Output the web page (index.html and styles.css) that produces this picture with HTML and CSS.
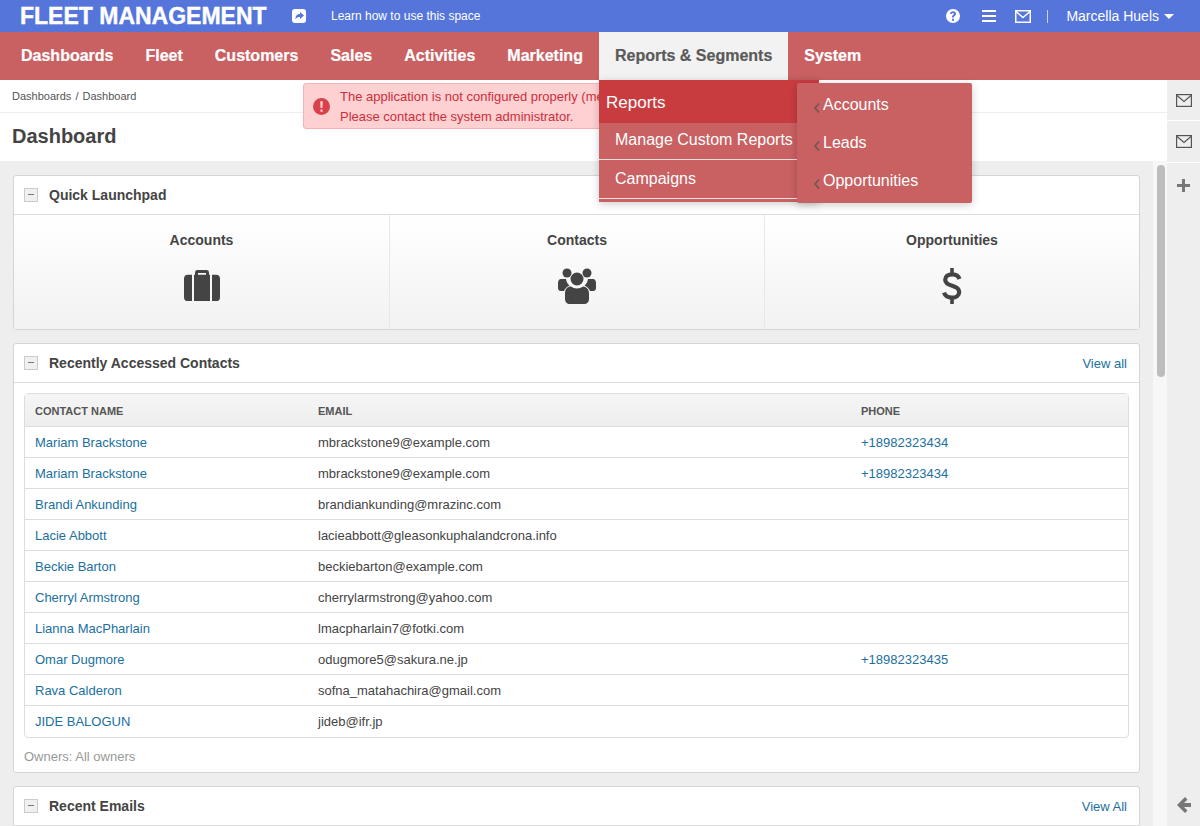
FILE: index.html
```html
<!DOCTYPE html>
<html lang="en">
<head>
<meta charset="UTF-8">
<meta name="viewport" content="width=device-width, initial-scale=1.0">
<title>Dashboard</title>
<link rel="stylesheet" href="styles.css">
</head>
<body>
    <header class="topbar">
        <div class="logo">FLEET MANAGEMENT</div>
        <svg class="share-icon" viewBox="0 0 14 14" width="14" height="14"><path fill="#fff" fill-rule="evenodd" d="M3 0h8a3 3 0 0 1 3 3v8a3 3 0 0 1-3 3H3a3 3 0 0 1-3-3V3a3 3 0 0 1 3-3zM8 3v2C5 5 3.500 6.500 3.500 10.500 4.500 8.500 6 8 8 8v2l4-3.500z"/></svg>
        <a class="learn">Learn how to use this space</a>
        <div class="top-right">
            <svg viewBox="0 0 14 14" width="14" height="14"><path fill="#fff" fill-rule="evenodd" d="M7 0a7 7 0 1 1 0 14A7 7 0 0 1 7 0zM6 9.800v2h2v-2zM7 2.300c-1.700 0-2.800.9-3 2.400l1.800.4c.1-.7.500-1.100 1.100-1.100.6 0 1 .3 1 .8 0 .5-.4.8-.9 1.200-.8.6-1 1.100-1 1.800v.7h1.900V8c0-.4.2-.6.8-1 .8-.6 1.300-1.200 1.300-2.200 0-1.500-1.200-2.500-3-2.500z"/></svg>
            <svg class="top-bars" viewBox="0 0 14 12" width="14" height="12"><path fill="#fff" d="M0 0h14v2H0zM0 5h14v2H0zM0 10h14v2H0z"/></svg>
            <svg class="top-mail" viewBox="0 0 16 13" width="16" height="13"><rect x=".75" y=".75" width="14.500" height="11.500" fill="none" stroke="#fff" stroke-width="1.500"/><path d="M1 1.500l7 6 7-6" fill="none" stroke="#fff" stroke-width="1.500"/></svg>
            <span class="divider"></span>
            <span class="user">Marcella Huels</span>
            <span class="caret"></span>
        </div>
    </header>

    <nav class="mainnav">
        <a>Dashboards</a>
        <a>Fleet</a>
        <a>Customers</a>
        <a>Sales</a>
        <a>Activities</a>
        <a>Marketing</a>
        <a class="active">Reports &amp; Segments</a>
        <a>System</a>
    </nav>

    <div class="menu">
        <div class="menu-title">Reports</div>
        <div class="menu-item">Manage Custom Reports</div>
        <div class="menu-item">Campaigns</div>
    </div>
    <div class="submenu">
        <div class="submenu-item"><svg class="chev" viewBox="0 0 6 10" width="6" height="10"><path d="M5 .5L1 5l4 4.500" fill="none" stroke="#6b5555" stroke-width="1.500"/></svg>Accounts</div>
        <div class="submenu-item"><svg class="chev" viewBox="0 0 6 10" width="6" height="10"><path d="M5 .5L1 5l4 4.500" fill="none" stroke="#6b5555" stroke-width="1.500"/></svg>Leads</div>
        <div class="submenu-item"><svg class="chev" viewBox="0 0 6 10" width="6" height="10"><path d="M5 .5L1 5l4 4.500" fill="none" stroke="#6b5555" stroke-width="1.500"/></svg>Opportunities</div>
    </div>

    <div class="alert">
        <svg viewBox="0 0 16 16" width="17" height="17"><path fill="#d9414c" fill-rule="evenodd" d="M8 0a8 8 0 1 1 0 16A8 8 0 0 1 8 0zM6.800 3l.3 6.500h1.800L9.200 3zM7 10.800v2.200h2v-2.200z"/></svg>
        <div class="alert-text">The application is not configured properly (me<br>Please contact the system administrator.</div>
    </div>

    <div class="wrap">
        <main class="main">
            <div class="breadcrumb">Dashboards <span class="sep">/</span> Dashboard</div>
            <h1 class="page-title">Dashboard</h1>
            <div class="scroller">
                <div class="panels">
                    <section class="panel">
                        <div class="panel-head">
                            <span class="toggle"></span>
                            <h2>Quick Launchpad</h2>
                        </div>
                        <div class="launchpad">
                            <div class="launch">
                                <div class="launch-name">Accounts</div>
                                <svg class="icon-case" viewBox="0 0 36 32" width="36" height="31" preserveAspectRatio="none"><path fill="#444" fill-rule="evenodd" d="M11 5V2.500A2.500 2.500 0 0 1 13.500 0h9A2.500 2.500 0 0 1 25 2.500V5h1v27H10V5zM14 5h8V3h-8zM8 5v27H4a4 4 0 0 1-4-4V9a4 4 0 0 1 4-4zM28 5h4a4 4 0 0 1 4 4v19a4 4 0 0 1-4 4h-4z"/></svg>
                            </div>
                            <div class="launch">
                                <div class="launch-name">Contacts</div>
                                <svg viewBox="0 0 38 36" width="38" height="36"><g fill="#444"><circle cx="9" cy="5" r="4.500"/><circle cx="29" cy="5" r="4.500"/><circle cx="19" cy="11" r="6.500"/><path d="M3 11h5c.5 3 1.500 5 3.500 6.500-2.500 1-4.500 3-5.500 5.500H3c-2 0-3-1-3-3v-5c0-2 1-4 3-4zM35 11h-5c-.5 3-1.500 5-3.500 6.500 2.500 1 4.500 3 5.500 5.500h3c2 0 3-1 3-3v-5c0-2-1-4-3-4zM13 18.500c1.500 1.300 3.700 2 6 2s4.500-.7 6-2c3.500 0 6 3 6 7V31c0 3-2 5-5 5H12c-3 0-5-2-5-5v-5.500c0-4.500 2.500-7 6-7z"/></g></svg>
                            </div>
                            <div class="launch">
                                <div class="launch-name">Opportunities</div>
                                <svg viewBox="0 0 20 36" width="20" height="36"><path d="M17.500 11C16.500 8 14 6.300 10.500 6.300 6 6.300 3.200 8.500 3.200 11.700c0 3.300 2.800 4.800 7 6.100 4.300 1.300 7 2.700 7 6.100 0 3.400-3 5.700-7.200 5.700-4 0-6.900-1.800-8-5" fill="none" stroke="#444" stroke-width="4.200"/><path d="M8.200 0h3.600v7H8.200zM8.200 29h3.600v7H8.200z" fill="#444"/></svg>
                            </div>
                        </div>
                    </section>

                    <section class="panel">
                        <div class="panel-head">
                            <span class="toggle"></span>
                            <h2>Recently Accessed Contacts</h2>
                            <a class="view-all">View all</a>
                        </div>
                        <div class="panel-body">
                            <table class="contacts">
                                <thead>
                                    <tr><th class="col-name">Contact name</th><th class="col-email">Email</th><th>Phone</th></tr>
                                </thead>
                                <tbody>
                                    <tr><td><a>Mariam Brackstone</a></td><td>mbrackstone9@example.com</td><td><a>+18982323434</a></td></tr>
                                    <tr><td><a>Mariam Brackstone</a></td><td>mbrackstone9@example.com</td><td><a>+18982323434</a></td></tr>
                                    <tr><td><a>Brandi Ankunding</a></td><td>brandiankunding@mrazinc.com</td><td></td></tr>
                                    <tr><td><a>Lacie Abbott</a></td><td>lacieabbott@gleasonkuphalandcrona.info</td><td></td></tr>
                                    <tr><td><a>Beckie Barton</a></td><td>beckiebarton@example.com</td><td></td></tr>
                                    <tr><td><a>Cherryl Armstrong</a></td><td>cherrylarmstrong@yahoo.com</td><td></td></tr>
                                    <tr><td><a>Lianna MacPharlain</a></td><td>lmacpharlain7@fotki.com</td><td></td></tr>
                                    <tr><td><a>Omar Dugmore</a></td><td>odugmore5@sakura.ne.jp</td><td><a>+18982323435</a></td></tr>
                                    <tr><td><a>Rava Calderon</a></td><td>sofna_matahachira@gmail.com</td><td></td></tr>
                                    <tr><td><a>JIDE BALOGUN</a></td><td>jideb@ifr.jp</td><td></td></tr>
                                </tbody>
                            </table>
                            <div class="owners">Owners: All owners</div>
                        </div>
                    </section>

                    <section class="panel">
                        <div class="panel-head">
                            <span class="toggle"></span>
                            <h2>Recent Emails</h2>
                            <a class="view-all">View All</a>
                        </div>
                    </section>
                </div>
                <div class="track"><div class="thumb"></div></div>
            </div>
        </main>
        <aside class="sidebar">
            <div class="side-btn">
                <svg viewBox="0 0 16 13" width="16" height="13"><rect x=".6" y=".6" width="14.800" height="11.800" fill="none" stroke="#555" stroke-width="1.200"/><path d="M1 1.500l7 6 7-6" fill="none" stroke="#555" stroke-width="1.200"/></svg>
            </div>
            <div class="side-btn side-btn-tall">
                <svg viewBox="0 0 16 13" width="16" height="13"><rect x=".6" y=".6" width="14.800" height="11.800" fill="none" stroke="#555" stroke-width="1.200"/><path d="M1 1.500l7 6 7-6" fill="none" stroke="#555" stroke-width="1.200"/></svg>
            </div>
            <div class="side-plus">
                <svg viewBox="0 0 13 13" width="13" height="13"><path fill="#777" d="M5 0h3v5h5v3H8v5H5V8H0V5h5z"/></svg>
            </div>
            <div class="side-arrow">
                <svg viewBox="0 0 14 16" width="14" height="16"><path fill="#777" d="M8 0l2.500 2.500L7 6h7v4H7l3.500 3.500L8 16 0 8z"/></svg>
            </div>
        </aside>
    </div>
</body>
</html>
```

FILE: styles.css
```css
* {
    box-sizing: border-box;
}

html, body {
    height: 100%;
}

body {
    font-family: "Liberation Sans", Arial, sans-serif;
    background-color: #eee;
    color: #444;
    margin: 0;
    overflow: hidden;
    display: flex;
    flex-direction: column;
    position: relative;
}

/* top bar */
.topbar {
    height: 32px;
    flex: none;
    background-color: #5575db;
    color: #fff;
    display: flex;
    align-items: center;
    padding: 0 26px 0 20px;
}

.logo {
    font-size: 23px;
    font-weight: bold;
    width: 272px;
    -webkit-text-stroke: 0.4px #fff;
}

.share-icon {
    flex: none;
}

.learn {
    font-size: 12px;
    margin-left: 25px;
}

.top-right {
    margin-left: auto;
    display: flex;
    align-items: center;
}

.top-right svg {
    flex: none;
}

.top-bars {
    margin-left: 22px;
}

.top-mail {
    margin-left: 19px;
}

.divider {
    width: 1px;
    height: 13px;
    margin-left: 16px;
    background-color: #c9d3f3;
}

.user {
    font-size: 14px;
    margin-left: 18px;
}

.caret {
    border-left: 5px solid transparent;
    border-right: 5px solid transparent;
    border-top: 5px solid #fff;
    margin-left: 5px;
}

/* main menu */
.mainnav {
    height: 48px;
    flex: none;
    background-color: #c96062;
    display: flex;
    padding-left: 5px;
}

.mainnav a {
    color: #fff;
    font-size: 16px;
    font-weight: bold;
    line-height: 48px;
    padding: 0 16px;
    -webkit-text-stroke: 0.2px;
}

.mainnav a.active {
    background-color: #f2f2f2;
    color: #5a5a5a;
}

.menu {
    position: absolute;
    left: 599px;
    top: 80px;
    width: 220px;
    height: 122px;
    background-color: #c96062;
    color: #fff;
    box-shadow: 0 2px 8px rgba(0, 0, 0, 0.2);
    z-index: 3;
}

.menu-title {
    height: 43px;
    line-height: 45px;
    padding-left: 7px;
    font-size: 17px;
    background-color: #c83c40;
}

.menu-item {
    height: 37px;
    line-height: 34px;
    padding-left: 16px;
    font-size: 16px;
    border-bottom: 1px solid #f3dede;
}

.menu-item + .menu-item {
    height: 39px;
    line-height: 37px;
}

.submenu {
    position: absolute;
    left: 797px;
    top: 83px;
    width: 175px;
    height: 120px;
    padding-top: 3px;
    background-color: #c96062;
    color: #fff;
    border-radius: 2px;
    box-shadow: 0 2px 8px rgba(0, 0, 0, 0.2);
    z-index: 4;
}

.submenu-item {
    height: 38px;
    line-height: 38px;
    font-size: 16px;
    padding-left: 17px;
    display: flex;
    align-items: center;
}

.chev {
    flex: none;
    margin: 6px 3px 0 0;
}

.alert {
    position: absolute;
    left: 303px;
    top: 83px;
    width: 320px;
    height: 46px;
    background-color: #fdd0d2;
    border: 1px solid #f3b3b6;
    border-radius: 3px;
    color: #cc2f3a;
    font-size: 13px;
    line-height: 20px;
    display: flex;
    align-items: center;
    gap: 10px;
    padding: 1px 0 0 9px;
    z-index: 2;
    white-space: nowrap;
}

.alert svg {
    flex: none;
}

/* page */
.wrap {
    flex: 1;
    min-height: 0;
    display: flex;
}

.main {
    flex: 1;
    min-width: 0;
    display: flex;
    flex-direction: column;
    background-color: #fff;
}

.breadcrumb {
    height: 33px;
    flex: none;
    padding: 10px 12px 0;
    font-size: 11px;
    color: #555;
    border-bottom: 1px solid #eee;
}

.sep {
    margin: 0 1px;
}

.page-title {
    height: 48px;
    flex: none;
    margin: 0;
    padding-left: 12px;
    font-size: 20px;
    line-height: 46px;
    color: #444;
}

.scroller {
    flex: 1;
    min-height: 0;
    display: flex;
    background-color: #eee;
    overflow: hidden;
}

.panels {
    flex: 1;
    min-width: 0;
    padding: 14px 13px 0 13px;
    display: flex;
    flex-direction: column;
    gap: 13px;
}

.track {
    width: 14px;
    flex: none;
    background-color: #f7f7f7;
    padding: 4px 2px 0 4px;
}

.thumb {
    height: 212px;
    border-radius: 4px;
    background-color: #bdbdbd;
}

.panel {
    flex: none;
    background-color: #fff;
    border: 1px solid #d5d5d5;
    border-radius: 3px;
}

.panel-head {
    height: 39px;
    display: flex;
    align-items: center;
    padding: 0 12px 0 10px;
    border-bottom: 1px solid #ddd;
}

.panel-head h2 {
    margin: 0 0 0 11px;
    font-size: 14px;
    font-weight: bold;
    color: #444;
}

.toggle {
    width: 14px;
    height: 14px;
    flex: none;
    border: 1px solid #ccc;
    background-color: #f0f0f0;
    position: relative;
}

.toggle::after {
    content: "";
    position: absolute;
    left: 3px;
    top: 5px;
    width: 6px;
    height: 1px;
    background-color: #777;
}

.view-all {
    margin-left: auto;
    font-size: 13px;
    color: #20709f;
}

.launchpad {
    display: grid;
    grid-template-columns: repeat(3, 1fr);
    height: 114px;
}

.launch {
    text-align: center;
    padding-top: 17px;
    background: linear-gradient(#fff, #f2f2f2);
    border-left: 1px solid #e8e8e8;
}

.launch:first-child {
    border-left: none;
}

.launch-name {
    font-size: 14px;
    font-weight: bold;
    line-height: 16px;
    margin-bottom: 20px;
}

.launch svg {
    display: block;
    margin: 0 auto;
}

.launch .icon-case {
    margin-top: 22px;
}

.panel-body {
    padding: 10px 10px 0;
}

.contacts {
    width: 100%;
    border-collapse: separate;
    border-spacing: 0;
    table-layout: fixed;
    border: 1px solid #ddd;
    border-radius: 4px;
    font-size: 13px;
}

.contacts th {
    height: 33px;
    text-align: left;
    padding: 2px 10px 0;
    font-size: 11px;
    font-weight: bold;
    text-transform: uppercase;
    color: #555;
    background: linear-gradient(#f5f5f5, #eee);
    border-bottom: 1px solid #ddd;
}

.col-name {
    width: 283px;
}

.col-email {
    width: 543px;
}

.contacts td {
    height: 31px;
    padding: 0 10px;
    border-bottom: 1px solid #ddd;
    color: #444;
}

.contacts tr:last-child td {
    border-bottom: none;
}

.contacts a {
    color: #20709f;
}

.owners {
    height: 34px;
    line-height: 38px;
    font-size: 13px;
    color: #999;
}

/* right sidebar */
.sidebar {
    width: 33px;
    flex: none;
    background-color: #eee;
    display: flex;
    flex-direction: column;
}

.side-btn {
    height: 41px;
    display: flex;
    align-items: center;
    justify-content: center;
    border-bottom: 1px solid #fff;
}

.side-btn-tall {
    height: 42px;
}

.side-plus {
    height: 44px;
    display: flex;
    align-items: center;
    justify-content: center;
}

.side-arrow {
    margin-top: auto;
    height: 42px;
    display: flex;
    align-items: center;
    justify-content: center;
}
```
